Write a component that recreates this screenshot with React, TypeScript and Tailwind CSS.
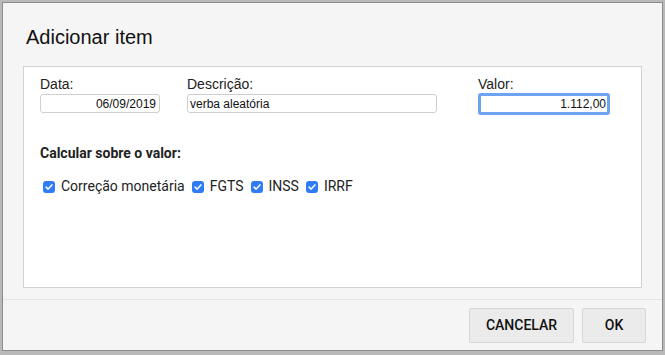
import React from "react";

const Check = ({ label }: { label: string }) => (
  <label className="flex items-center">
    <span className="ml-[3px] mr-[6px] flex h-[12px] w-[12px] items-center justify-center rounded-[3px] bg-[#2f7cf6]">
      <svg viewBox="0 0 12 12" className="h-[10px] w-[10px]">
        <path d="M2.5 6.2 L5 8.5 L9.5 3.5" fill="none" stroke="#fff" strokeWidth="1.8" strokeLinecap="round" strokeLinejoin="round" />
      </svg>
    </span>
    <span className="text-[14px] text-[#222]">{label}</span>
  </label>
);

export default function App() {
  return (
    <div className="h-[355px] w-[665px] overflow-hidden bg-[#b9b9b9] pl-[2px] pr-[2px] pt-[2px] pb-[4px] font-['Liberation_Sans',sans-serif]">
      <div className="flex h-full flex-col border border-[#8c8c8c] bg-[#f5f5f5]">
        <div className="h-[63px] px-[23px] pt-[22px]">
          <h1 className="text-[20px] leading-[24px] text-[#111]">Adicionar item</h1>
        </div>
        <div className="mx-[20px] h-[222px] border border-[#d2d2d2] bg-white px-[16px] pt-[9px]">
          <div className="flex">
            <div className="flex w-[120px] flex-col">
              <span className="text-[14px] leading-[17px] text-[#222]">Data:</span>
              <input
                readOnly
                value="06/09/2019"
                className="mt-[1px] h-[19px] w-[120px] rounded-[3px] border border-[#cfcfcf] bg-white px-[3px] text-right text-[12px] text-[#111] outline-none"
              />
            </div>
            <div className="ml-[27px] flex w-[250px] flex-col">
              <span className="text-[14px] leading-[17px] text-[#222]">Descrição:</span>
              <input
                readOnly
                value="verba aleatória"
                className="mt-[1px] h-[19px] w-[250px] rounded-[3px] border border-[#cfcfcf] bg-white px-[2px] text-[12px] text-[#111] outline-none"
              />
            </div>
            <div className="ml-[41px] flex w-[132px] flex-col">
              <span className="text-[14px] leading-[17px] text-[#222]">Valor:</span>
              <input
                readOnly
                value="1.112,00"
                className="mt-0 h-[22px] w-[132px] rounded-[3px] border-[3px] border-[#6ea3f2] bg-white px-[1px] text-right text-[12px] text-[#111] outline-none"
              />
            </div>
          </div>
          <div className="mt-[30px] font-['Roboto',sans-serif] text-[14px] font-bold leading-[17px] text-[#222]">
            Calcular sobre o valor:
          </div>
          <div className="mt-[14px] flex items-center gap-[4px] font-['Roboto',sans-serif]">
            <Check label="Correção monetária" />
            <Check label="FGTS" />
            <Check label="INSS" />
            <Check label="IRRF" />
          </div>
        </div>
        <div className="mt-[11px] border-t border-[#e3e3e3]" />
        <div className="flex justify-end gap-[8px] pr-[16px] pt-[8px] font-['Roboto',sans-serif]">
          <button className="h-[35px] w-[105px] rounded-[2px] border border-[#d6d6d6] bg-[#ebebeb] text-[14px] font-medium text-[#111]">
            CANCELAR
          </button>
          <button className="h-[35px] w-[64px] rounded-[2px] border border-[#d6d6d6] bg-[#ebebeb] text-[14px] font-medium text-[#111]">
            OK
          </button>
        </div>
      </div>
    </div>
  );
}
